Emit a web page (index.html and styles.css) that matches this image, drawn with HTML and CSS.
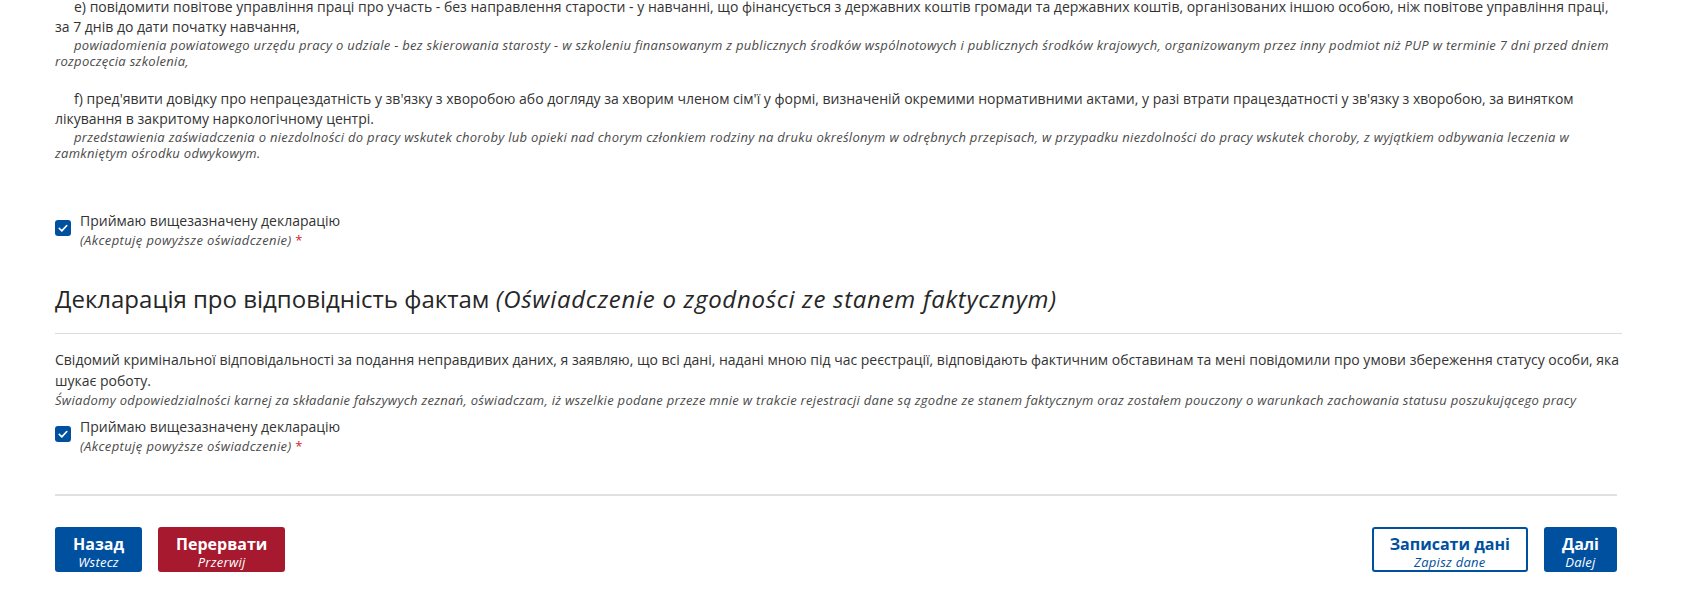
FILE: index.html
```html
<!DOCTYPE html>
<html lang="uk">
<head>
<meta charset="utf-8">
<title>Декларація</title>
<link rel="stylesheet" href="styles.css">
</head>
<body>
<div class="page">
  <section class="clauses">
    <div class="clause">
      <p class="ua indent">е) повідомити повітове управління праці про участь - без направлення старости - у навчанні, що фінансується з державних коштів громади та державних коштів, організованих іншою особою, ніж повітове управління праці, за 7 днів до дати початку навчання,</p>
      <p class="pl indent">powiadomienia powiatowego urzędu pracy o udziale - bez skierowania starosty - w szkoleniu finansowanym z publicznych środków wspólnotowych i publicznych środków krajowych, organizowanym przez inny podmiot niż PUP w terminie 7 dni przed dniem rozpoczęcia szkolenia,</p>
    </div>
    <div class="clause">
      <p class="ua indent">f) пред'явити довідку про непрацездатність у зв'язку з хворобою або догляду за хворим членом сім'ї у формі, визначеній окремими нормативними актами, у разі втрати працездатності у зв'язку з хворобою, за винятком лікування в закритому наркологічному центрі.</p>
      <p class="pl indent">przedstawienia zaświadczenia o niezdolności do pracy wskutek choroby lub opieki nad chorym członkiem rodziny na druku określonym w odrębnych przepisach, w przypadku niezdolności do pracy wskutek choroby, z wyjątkiem odbywania leczenia w zamkniętym ośrodku odwykowym.</p>
    </div>
  </section>

  <label class="check first">
    <span class="box"><svg viewBox="0 0 16 16" width="16" height="16"><path d="M4.2 8.3l2.6 2.6 5-5.4" fill="none" stroke="#fff" stroke-width="1.6" stroke-linecap="round" stroke-linejoin="round"/></svg></span>
    <span class="check-text">
      <span class="check-ua">Приймаю вищезазначену декларацію</span>
      <span class="check-pl">(Akceptuję powyższe oświadczenie) <span class="req">*</span></span>
    </span>
  </label>

  <h2 class="section-title">Декларація про відповідність фактам <em>(Oświadczenie o zgodności ze stanem faktycznym)</em></h2>

  <section class="statement">
    <p class="ua">Свідомий кримінальної відповідальності за подання неправдивих даних, я заявляю, що всі дані, надані мною під час реєстрації, відповідають фактичним обставинам та мені повідомили про умови збереження статусу особи, яка шукає роботу.</p>
    <p class="pl">Świadomy odpowiedzialności karnej za składanie fałszywych zeznań, oświadczam, iż wszelkie podane przeze mnie w trakcie rejestracji dane są zgodne ze stanem faktycznym oraz zostałem pouczony o warunkach zachowania statusu poszukującego pracy</p>
  </section>

  <label class="check second">
    <span class="box"><svg viewBox="0 0 16 16" width="16" height="16"><path d="M4.2 8.3l2.6 2.6 5-5.4" fill="none" stroke="#fff" stroke-width="1.6" stroke-linecap="round" stroke-linejoin="round"/></svg></span>
    <span class="check-text">
      <span class="check-ua">Приймаю вищезазначену декларацію</span>
      <span class="check-pl">(Akceptuję powyższe oświadczenie) <span class="req">*</span></span>
    </span>
  </label>

  <div class="actions">
    <div class="group">
      <button class="btn primary"><b>Назад</b><i>Wstecz</i></button>
      <button class="btn danger"><b>Перервати</b><i>Przerwij</i></button>
    </div>
    <div class="group">
      <button class="btn outline"><b>Записати дані</b><i>Zapisz dane</i></button>
      <button class="btn primary"><b>Далі</b><i>Dalej</i></button>
    </div>
  </div>
</div>
</body>
</html>
```
FILE: styles.css
```css
* { box-sizing: border-box; }
html, body { margin: 0; padding: 0; background: #fff; }
body {
  font-family: "Open Sans", "Noto Sans", sans-serif;
  color: #333;
  font-size: 14px;
  overflow: hidden;
}
.page {
  padding: 0 60px 0 55px;
}
p { margin: 0; }
.clauses { margin-top: -3px; }
.clause + .clause { margin-top: 20px; }
.ua { font-size: 14px; line-height: 20px; }
.pl, .check-pl, .btn i, .section-title em {
  font-family: "Open Sans", "Noto Sans", sans-serif;
  font-style: italic;
}
.pl { font-size: 13px; line-height: 16px; color: #4a4a4a; letter-spacing: 0.3px; }
.indent { text-indent: 19px; }

.check {
  display: flex;
  align-items: flex-start;
  gap: 9px;
}
.check.first { margin-top: 50px; }
.check.second { margin-top: 8px; }
.box {
  width: 16px; height: 16px;
  margin-top: 9px;
  background: #0050a0;
  border-radius: 3px;
  display: flex;
  flex: none;
}
.check-text { display: flex; flex-direction: column; }
.check-ua { font-size: 14px; line-height: 20px; }
.check-pl { font-size: 13px; line-height: 18px; color: #4a4a4a; letter-spacing: 0.39px; }
.req { color: #d2232a; font-style: normal; }

.section-title {
  margin: 35px 0 0;
  font-size: 24px;
  font-weight: 400;
  line-height: 30px;
  color: #262626;
  padding-bottom: 19px;
  border-bottom: 1px solid #dcdcdc;
}
.section-title em { letter-spacing: 0.72px; }

.statement { margin-top: 15px; }
.statement .ua { line-height: 21px; }
.statement .pl { line-height: 18px; }

.actions {
  margin-top: 39px;
  margin-right: 5px;
  border-top: 2px solid #e0e0e0;
  padding-top: 31px;
  display: flex;
  justify-content: space-between;
}
.group { display: flex; gap: 16px; }
.btn {
  font-family: "Open Sans", "Noto Sans", sans-serif;
  display: flex;
  flex-direction: column;
  align-items: center;
  height: 45px;
  padding: 4px 16px 0;
  border-radius: 3px;
  border: 2px solid transparent;
  color: #fff;
  cursor: pointer;
}
.btn b { font-size: 16px; font-weight: 700; line-height: 22px; }
.btn i { font-size: 13px; line-height: 15px; letter-spacing: 0.26px; }
.btn.primary { background: #0050a0; border-color: #0050a0; }
.btn.danger { background: #a6192e; border-color: #a6192e; }
.btn.outline { background: #fff; border-color: #0050a0; color: #0050a0; }
```
